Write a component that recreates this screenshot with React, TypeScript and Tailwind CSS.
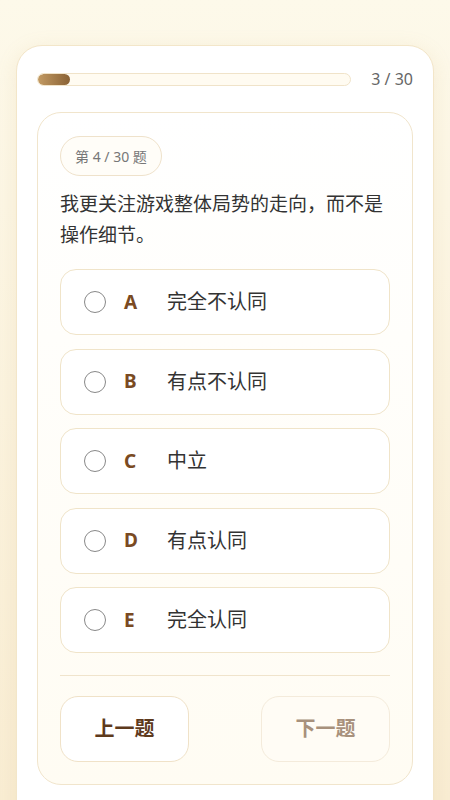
import { useState } from "react";

const OPTIONS = [
  { key: "A", label: "完全不认同" },
  { key: "B", label: "有点不认同" },
  { key: "C", label: "中立" },
  { key: "D", label: "有点认同" },
  { key: "E", label: "完全认同" },
];

const FONT = { fontFamily: '"Noto Sans", "Noto Sans CJK SC", sans-serif' };

export default function App() {
  const [selected, setSelected] = useState<string | null>(null);

  return (
    <div
      className="h-[800px] overflow-hidden bg-gradient-to-b from-[#fdf9ea] to-[#f9edd3] px-4 pt-[45px]"
      style={FONT}
    >
      <div className="h-[800px] rounded-[26px] border border-[#f3e6c9] bg-white px-5 pt-[25px] shadow-[0_4px_20px_rgba(200,170,110,0.15)]">
        {/* 进度条 */}
        <div className="flex items-center gap-5">
          <div className="h-[13px] flex-1 overflow-hidden rounded-full border border-[#f0e3c9] bg-[#fffbf1]">
            <div className="h-full w-[32px] rounded-full bg-gradient-to-r from-[#c29a63] to-[#8a6235]" />
          </div>
          <span className="text-[16px] leading-none text-[#666]">3 / 30</span>
        </div>

        {/* 题目卡片 */}
        <div className="mt-[25px] rounded-[24px] border border-[#f1e5cc] bg-gradient-to-b from-white to-[#fffcf3] px-[22px] pt-[23px] pb-[22px]">
          <div className="inline-flex h-[40px] items-center rounded-full border border-[#efe2cb] bg-[#fffdf8] px-[14px] text-[14px] text-[#777]">
            第 4 / 30 题
          </div>
          <p className="mt-[13px] text-[19px] leading-[31px] text-[#333]">
            我更关注游戏整体局势的走向，而不是操作细节。
          </p>

          <div className="mt-[18px] flex flex-col gap-[13.5px]">
            {OPTIONS.map((o) => (
              <button
                key={o.key}
                onClick={() => setSelected(o.key)}
                className="flex h-[66px] items-center rounded-[16px] border border-[#f0e4c9] bg-white px-[23px] text-left"
              >
                <span
                  className={
                    selected === o.key
                      ? "h-[22px] w-[22px] rounded-full border-[6px] border-[#8a5a2b]"
                      : "h-[22px] w-[22px] rounded-full border-[1.5px] border-[#888]"
                  }
                />
                <span className="ml-[18px] w-[43px] text-[19px] font-bold text-[#7a4a22]">{o.key}</span>
                <span className="text-[20px] text-[#333]">{o.label}</span>
              </button>
            ))}
          </div>

          <div className="mt-[22px] h-px bg-[#f0e4cc]" />

          <div className="mt-[20px] flex justify-between">
            <button className="h-[66px] w-[129px] rounded-[18px] border border-[#f0e2c8] bg-white text-[20px] font-bold text-[#5e3a1c]">
              上一题
            </button>
            <button className="h-[66px] w-[129px] rounded-[18px] border border-[#f4ebdb] bg-[#fffcf5] text-[20px] font-bold text-[#a8917c]">
              下一题
            </button>
          </div>
        </div>
      </div>
    </div>
  );
}
